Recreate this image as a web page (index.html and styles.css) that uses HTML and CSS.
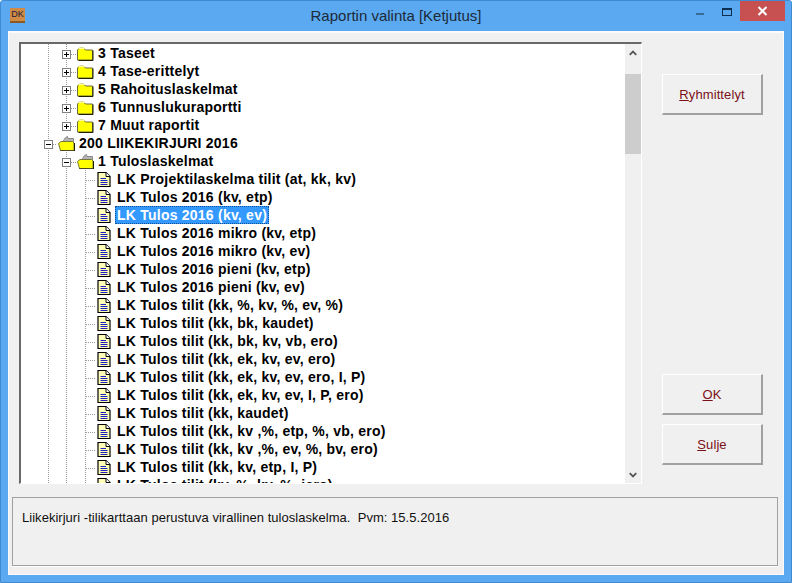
FILE: index.html
```html
<!DOCTYPE html>
<html lang="fi">
<head>
<meta charset="utf-8">
<title>Raportin valinta [Ketjutus]</title>
<link rel="stylesheet" href="styles.css">
</head>
<body>
<svg class="defs" width="0" height="0" aria-hidden="true">
  <symbol id="closed" viewBox="0 0 17 14">
    <path d="M0.5 13.5V3.5L2.5 1.5H6.5L8.5 3.5H15.5V13.5Z" fill="#ffff00" stroke="#6b6b3a"/>
    <path d="M1 2.5L2.5 1H6.5L8 2.5Z" fill="#ffffa0"/>
    <path d="M16 4V14H1.5" fill="none" stroke="#202000" stroke-width="1"/>
  </symbol>
  <symbol id="open" viewBox="0 0 17 15">
    <path d="M5.5 4.5L7.5 1.5L9.5 0.5L10 2.5H15.5V8H5.5Z" fill="#b4b4b4" stroke="#8a8a8a"/>
    <path d="M0.5 7.5L3 5.5H14.5L16 7V14.5H2.5Z" fill="#ffff00" stroke="#77773a"/>
    <path d="M16.5 7V15H2" fill="none" stroke="#202000"/>
  </symbol>
  <symbol id="doc" viewBox="0 0 14 15">
    <path d="M1 0.5H9L13 4.5V14.5H1Z" fill="#ffffb8" stroke="#000" stroke-width="1.2"/>
    <path d="M9 0.5V4.5H13" fill="#fff" stroke="#000"/>
    <path d="M3.5 6.5H9M3.5 8.5H10.5M3.5 10.5H10.5M3.5 12.5H10.5" stroke="#2020c0" fill="none"/>
  </symbol>
  <symbol id="up" viewBox="0 0 8 6"><path d="M0.7 4.8L4 1.6L7.3 4.8" fill="none" stroke="#555" stroke-width="1.8"/></symbol>
  <symbol id="down" viewBox="0 0 8 6"><path d="M0.7 1.2L4 4.4L7.3 1.2" fill="none" stroke="#555" stroke-width="1.8"/></symbol>
</svg>
<div class="win">
  <header class="titlebar">
    <div class="tb-left"><span class="appicon"><span class="appicon-t">DK</span></span></div>
    <div class="tb-title">Raportin valinta [Ketjutus]</div>
    <div class="tb-right">
      <span class="ctl-min"></span>
      <span class="ctl-max"></span>
      <span class="ctl-close">
        <svg width="11" height="10" viewBox="0 0 11 10"><path d="M1.5 1L9.5 9M9.5 1L1.5 9" stroke="#fff" stroke-width="2" fill="none"/></svg>
      </span>
    </div>
  </header>
  <main class="content">
    <div class="top">
      <div class="panel">
        <div class="tree">
          <div class="row"><i class="c v"></i><i class="c v h"><b class="box plus"></b></i><svg class="fold"><use href="#closed"/></svg><span class="lbl">3 Taseet</span></div>
          <div class="row"><i class="c v"></i><i class="c v h"><b class="box plus"></b></i><svg class="fold"><use href="#closed"/></svg><span class="lbl">4 Tase-erittelyt</span></div>
          <div class="row"><i class="c v"></i><i class="c v h"><b class="box plus"></b></i><svg class="fold"><use href="#closed"/></svg><span class="lbl">5 Rahoituslaskelmat</span></div>
          <div class="row"><i class="c v"></i><i class="c v h"><b class="box plus"></b></i><svg class="fold"><use href="#closed"/></svg><span class="lbl">6 Tunnuslukuraportti</span></div>
          <div class="row"><i class="c v"></i><i class="c end h"><b class="box plus"></b></i><svg class="fold"><use href="#closed"/></svg><span class="lbl">7 Muut raportit</span></div>
          <div class="row"><i class="c v h"><b class="box minus"></b></i><svg class="fold"><use href="#open"/></svg><span class="lbl">200 LIIKEKIRJURI 2016</span></div>
          <div class="row"><i class="c v"></i><i class="c v h"><b class="box minus"></b></i><svg class="fold"><use href="#open"/></svg><span class="lbl">1 Tuloslaskelmat</span></div>
          <div class="row"><i class="c v"></i><i class="c v"></i><i class="c v h"></i><svg class="leaf"><use href="#doc"/></svg><span class="lbl">LK Projektilaskelma tilit (at, kk, kv)</span></div>
          <div class="row"><i class="c v"></i><i class="c v"></i><i class="c v h"></i><svg class="leaf"><use href="#doc"/></svg><span class="lbl">LK Tulos 2016 (kv, etp)</span></div>
          <div class="row"><i class="c v"></i><i class="c v"></i><i class="c v h"></i><svg class="leaf"><use href="#doc"/></svg><span class="lbl sel">LK Tulos 2016 (kv, ev)</span></div>
          <div class="row"><i class="c v"></i><i class="c v"></i><i class="c v h"></i><svg class="leaf"><use href="#doc"/></svg><span class="lbl">LK Tulos 2016 mikro (kv, etp)</span></div>
          <div class="row"><i class="c v"></i><i class="c v"></i><i class="c v h"></i><svg class="leaf"><use href="#doc"/></svg><span class="lbl">LK Tulos 2016 mikro (kv, ev)</span></div>
          <div class="row"><i class="c v"></i><i class="c v"></i><i class="c v h"></i><svg class="leaf"><use href="#doc"/></svg><span class="lbl">LK Tulos 2016 pieni (kv, etp)</span></div>
          <div class="row"><i class="c v"></i><i class="c v"></i><i class="c v h"></i><svg class="leaf"><use href="#doc"/></svg><span class="lbl">LK Tulos 2016 pieni (kv, ev)</span></div>
          <div class="row"><i class="c v"></i><i class="c v"></i><i class="c v h"></i><svg class="leaf"><use href="#doc"/></svg><span class="lbl">LK Tulos tilit (kk, %, kv, %, ev, %)</span></div>
          <div class="row"><i class="c v"></i><i class="c v"></i><i class="c v h"></i><svg class="leaf"><use href="#doc"/></svg><span class="lbl">LK Tulos tilit (kk, bk, kaudet)</span></div>
          <div class="row"><i class="c v"></i><i class="c v"></i><i class="c v h"></i><svg class="leaf"><use href="#doc"/></svg><span class="lbl">LK Tulos tilit (kk, bk, kv, vb, ero)</span></div>
          <div class="row"><i class="c v"></i><i class="c v"></i><i class="c v h"></i><svg class="leaf"><use href="#doc"/></svg><span class="lbl">LK Tulos tilit (kk, ek, kv, ev, ero)</span></div>
          <div class="row"><i class="c v"></i><i class="c v"></i><i class="c v h"></i><svg class="leaf"><use href="#doc"/></svg><span class="lbl">LK Tulos tilit (kk, ek, kv, ev, ero, I, P)</span></div>
          <div class="row"><i class="c v"></i><i class="c v"></i><i class="c v h"></i><svg class="leaf"><use href="#doc"/></svg><span class="lbl">LK Tulos tilit (kk, ek, kv, ev, I, P, ero)</span></div>
          <div class="row"><i class="c v"></i><i class="c v"></i><i class="c v h"></i><svg class="leaf"><use href="#doc"/></svg><span class="lbl">LK Tulos tilit (kk, kaudet)</span></div>
          <div class="row"><i class="c v"></i><i class="c v"></i><i class="c v h"></i><svg class="leaf"><use href="#doc"/></svg><span class="lbl">LK Tulos tilit (kk, kv ,%, etp, %, vb, ero)</span></div>
          <div class="row"><i class="c v"></i><i class="c v"></i><i class="c v h"></i><svg class="leaf"><use href="#doc"/></svg><span class="lbl">LK Tulos tilit (kk, kv ,%, ev, %, bv, ero)</span></div>
          <div class="row"><i class="c v"></i><i class="c v"></i><i class="c v h"></i><svg class="leaf"><use href="#doc"/></svg><span class="lbl">LK Tulos tilit (kk, kv, etp, I, P)</span></div>
          <div class="row"><i class="c v"></i><i class="c v"></i><i class="c v h"></i><svg class="leaf"><use href="#doc"/></svg><span class="lbl">LK Tulos tilit (kv, %, kv, %, jero)</span></div>
        </div>
        <div class="sb">
          <span class="sb-btn"><svg width="8" height="6"><use href="#up"/></svg></span>
          <span class="sb-thumb"></span>
          <span class="sb-btn sb-end"><svg width="8" height="6"><use href="#down"/></svg></span>
        </div>
      </div>
      <aside class="side">
        <button class="btn"><u>R</u>yhmittelyt</button>
        <div class="side-gap"></div>
        <button class="btn"><u>O</u>K</button>
        <button class="btn"><u>S</u>ulje</button>
      </aside>
    </div>
    <div class="status">Liikekirjuri -tilikarttaan perustuva virallinen tuloslaskelma.&nbsp; Pvm: 15.5.2016</div>
  </main>
</div>
</body>
</html>
```
FILE: styles.css
```css
* { box-sizing: border-box; }
html, body { margin: 0; padding: 0; }
body { width: 792px; height: 583px; overflow: hidden; background: #fff; }
.defs { position: absolute; }

.win {
  width: 792px; height: 583px;
  display: flex; flex-direction: column;
  background: #5ba9f0;
  border: 1px solid #3f8ad0;
  border-radius: 3px 3px 0 0;
  padding: 0 7px 7px 7px;
  font-family: "Liberation Sans", Arial, sans-serif;
}

.titlebar {
  height: 30px; flex: none;
  display: grid; grid-template-columns: 1fr auto 1fr;
  margin: 0 -7px;
}
.tb-left { display: flex; padding: 7px 0 0 9px; }
.appicon {
  width: 15px; height: 15px;
  background: #cf8a45;
  display: flex; justify-content: center;
  border-bottom: 2px solid #8a5a20;
}
.appicon-t { font-size: 9px; line-height: 12px; color: #1c1c3c; letter-spacing: 0; }
.tb-title { font-size: 15px; line-height: 30px; color: #1b2a38; }
.tb-right { display: flex; justify-content: flex-end; align-items: flex-start; padding-right: 6px; }
.ctl-min { width: 8px; height: 2px; background: #3a6a96; margin-top: 12px; margin-right: 18px; }
.ctl-max { width: 10px; height: 8px; border: 1px solid #0f2f50; border-top-width: 2px; margin-top: 7px; margin-right: 8px; }
.ctl-close {
  width: 45px; height: 20px; background: #c75050;
  display: flex; align-items: center; justify-content: center;
}

.content {
  flex: 1; min-height: 0;
  background: #f0f0f0;
  border: 1px solid #fbfbfb;
  border-top-width: 2px;
  display: flex; flex-direction: column;
}
.top { display: flex; padding: 9px 0 0 10px; height: 451px; }

.panel {
  width: 623px; height: 442px;
  display: flex;
  border-style: solid; border-color: #696969 #fff #fff #696969;
  border-width: 2px 1px 1px 2px;
  flex: none;
}
.tree {
  width: 604px; height: 439px;
  background: #fff; overflow: hidden;
  flex: none;
}
.row {
  height: 18px; display: flex;
  padding-left: 18px;
  font-size: 14px; font-weight: 700; color: #000;
  white-space: nowrap;
}
.c { display: block; width: 19px; height: 18px; flex: none; padding: 6px 0 0 5px; background-repeat: no-repeat; }
.row > .c:first-child { width: 18px; }
.v { background-image: repeating-linear-gradient(#9a9a9a 0 1px, transparent 1px 2px); background-size: 1px 18px; background-position: 9px 0; }
.end { background-image: repeating-linear-gradient(#9a9a9a 0 1px, transparent 1px 2px); background-size: 1px 8px; background-position: 9px 0; }
.h {
  background-image:
    repeating-linear-gradient(#9a9a9a 0 1px, transparent 1px 2px),
    repeating-linear-gradient(90deg, #9a9a9a 0 1px, transparent 1px 2px);
  background-size: 1px 18px, 10px 1px;
  background-position: 9px 0, 10px 10px;
}
.end.h { background-size: 1px 8px, 10px 1px; }
.box {
  display: block; width: 9px; height: 9px;
  border: 1px solid #808080;
  background-color: #fff;
  background-repeat: no-repeat;
}
.plus {
  background-image: linear-gradient(#000, #000), linear-gradient(#000, #000);
  background-size: 5px 1px, 1px 5px;
  background-position: 1px 3px, 3px 1px;
}
.minus {
  background-image: linear-gradient(#000, #000);
  background-size: 5px 1px;
  background-position: 1px 3px;
}
.fold { width: 17px; height: 15px; margin: 2px 0 0 1px; flex: none; }
.leaf { width: 14px; height: 15px; margin: 2px 0 0 2px; flex: none; }
.lbl {
  display: block; height: 18px; line-height: 18px;
  padding: 0 2px; margin-left: 2px;
  letter-spacing: 0.23px;
}
.leaf + .lbl { margin-left: 4px; }
.sel {
  background: #3399ff; color: #fff;
  outline: 1px dotted #0b4f96; outline-offset: -1px;
}

.sb { width: 16px; flex: none; display: flex; flex-direction: column; background: #f0f0f0; }
.sb-btn { height: 17px; flex: none; display: flex; align-items: center; justify-content: center; }
.sb-thumb { height: 80px; margin-top: 13px; background: #cdcdcd; flex: none; }
.sb-end { margin-top: auto; }

.side { flex: 1; display: flex; flex-direction: column; padding: 32px 0 0 20px; }
.side-gap { height: 259px; flex: none; }
.btn {
  width: 101px; height: 41px; flex: none;
  background: #f0f0f0;
  border-style: solid; border-width: 1px 2px 2px 1px;
  border-color: #fff #a0a0a0 #a0a0a0 #fff;
  padding: 0;
  font-family: "Liberation Sans", Arial, sans-serif;
  font-size: 13px; letter-spacing: 0.1px; color: #7a1018;
  margin-bottom: 9px;
}
.btn:nth-of-type(1) { margin-bottom: 0; }

.status {
  margin: 13px 5px 0 3px;
  height: 69px;
  border: 1px solid #a0a0a0;
  box-shadow: 0 1px 0 #fff;
  padding: 11px 9px;
  font-size: 13px; line-height: 18px; letter-spacing: 0.03px; color: #111;
}
```
